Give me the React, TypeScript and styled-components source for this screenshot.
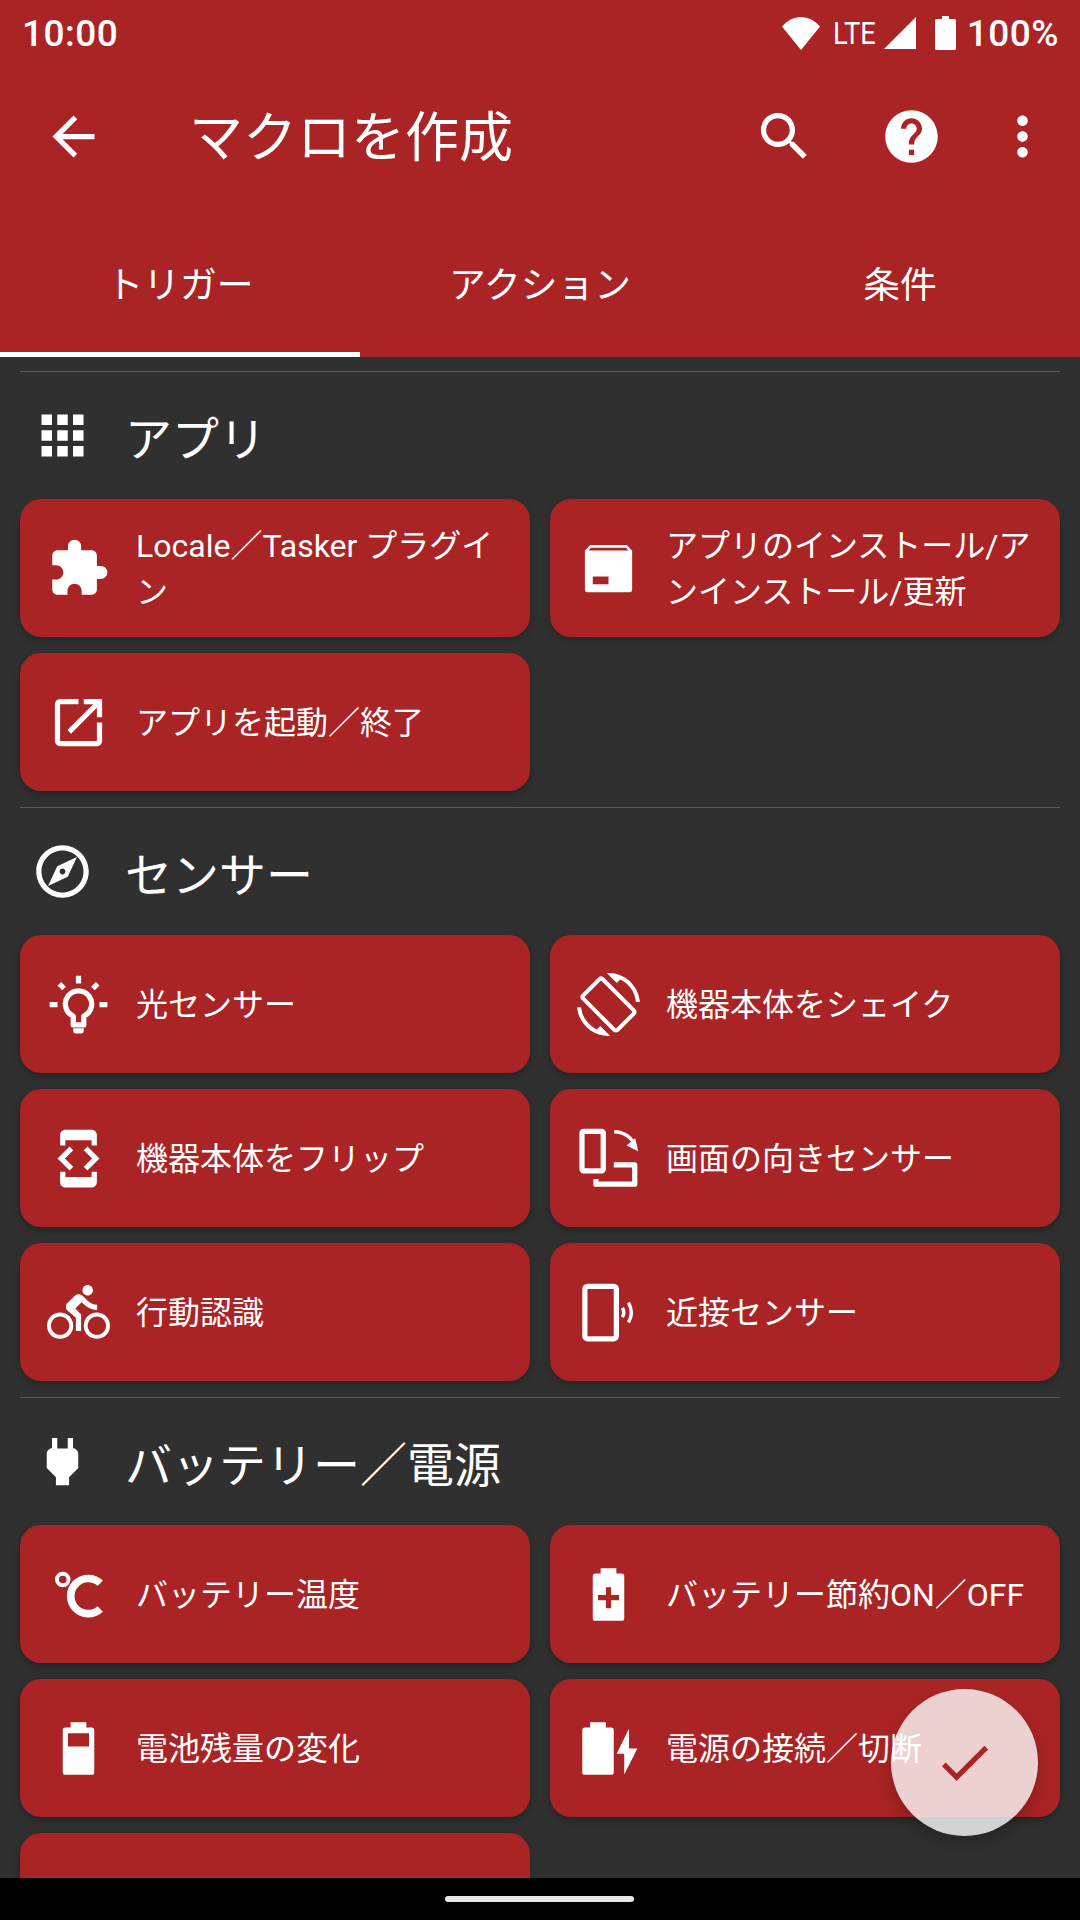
import React from 'react';
import styled, { createGlobalStyle } from 'styled-components';
import {
  MdApps,
  MdArrowBack,
  MdCheck,
  MdDeveloperMode,
  MdDirectionsBike,
  MdExtension,
  MdHelp,
  MdMoreVert,
  MdOpenInNew,
  MdOutlineExplore,
  MdPower,
  MdScreenRotation,
  MdSearch,
} from 'react-icons/md';

const RED = '#ab2425';
const FONT = 'Roboto, "Noto Sans CJK JP", sans-serif';

const GlobalStyle = createGlobalStyle`
  html, body {
    margin: 0;
    padding: 0;
    background: #000;
  }
  * {
    box-sizing: border-box;
  }
`;

const Screen = styled.div`
  position: relative;
  display: flex;
  flex-direction: column;
  width: 1080px;
  height: 1920px;
  overflow: hidden;
  background: #303030;
  color: #fff;
  font-family: ${FONT};
`;

const AppBar = styled.header`
  flex: none;
  height: 357px;
  background: ${RED};
`;

const StatusBar = styled.div`
  display: flex;
  align-items: center;
  justify-content: space-between;
  height: 66px;
  padding: 0 21px 0 22px;
  font-size: 37px;
  font-weight: 500;
`;

const ClockLabel = styled.span`
  letter-spacing: 0.5px;
`;

const StatusRight = styled.div`
  display: flex;
  align-items: center;
`;

const LteLabel = styled.span`
  width: 45px;
  margin: 0 6px 0 13px;
  font-size: 31px;
  font-weight: 400;
  line-height: 1;
  transform: scaleX(0.88);
  transform-origin: left center;
`;

const BatteryLabel = styled.span`
  margin-left: 11px;
  letter-spacing: 0.5px;
`;

const Toolbar = styled.div`
  display: flex;
  align-items: center;
  height: 140px;
  padding: 0 26px 0 42px;
`;

const Title = styled.h1`
  flex: 1;
  margin: 0 0 5px 84px;
  font-size: 54px;
  font-weight: 400;
`;

const ToolButton = styled.span<{ $gap?: number }>`
  display: flex;
  flex: none;
  width: 63px;
  height: 63px;
  margin-left: ${(p) => p.$gap ?? 0}px;
`;

const Tabs = styled.nav`
  display: grid;
  grid-template-columns: repeat(3, 360px);
  height: 151px;
`;

const Tab = styled.div<{ $active?: boolean }>`
  display: flex;
  align-items: center;
  justify-content: center;
  padding-top: 5px;
  font-size: 36.75px;
  border-bottom: 5px solid ${(p) => (p.$active ? '#fff' : 'transparent')};
`;

const Content = styled.main`
  flex: 1;
  overflow: hidden;
  padding: 14px 20px 0;
`;

const Section = styled.section`
  padding-bottom: 16px;
  border-top: 1px solid #5a5a5a;
`;

const SectionHeader = styled.div`
  display: flex;
  align-items: center;
  gap: 31px;
  height: 127px;
  padding-left: 11px;
`;

const SectionTitle = styled.h2`
  margin: 0;
  font-size: 47px;
  font-weight: 400;
`;

const CardGrid = styled.div`
  display: grid;
  grid-template-columns: repeat(2, 510px);
  grid-auto-rows: 138px;
  gap: 16px 20px;
`;

const Card = styled.div`
  display: flex;
  align-items: center;
  gap: 26px;
  padding: 0 20px 0 27px;
  border-radius: 21px;
  background: ${RED};
  box-shadow: 0 3px 7px rgba(0, 0, 0, 0.28);
`;

const CardLabel = styled.span`
  flex: 1;
  padding-top: 2px;
  font-size: 32px;
  line-height: 46px;
`;

const IconSlot = styled.span`
  display: flex;
  flex: none;
  width: 63px;
  height: 63px;
`;

const NavBar = styled.div`
  display: flex;
  flex: none;
  align-items: center;
  justify-content: center;
  height: 42px;
  background: #000;
`;

const NavPill = styled.div`
  width: 189px;
  height: 6px;
  margin-right: 2px;
  border-radius: 3px;
  background: #e8e8e8;
`;

const Fab = styled.button`
  position: absolute;
  right: 42px;
  bottom: 84px;
  display: flex;
  align-items: center;
  justify-content: center;
  width: 147px;
  height: 147px;
  padding: 0;
  border: 0;
  border-radius: 50%;
  color: ${RED};
  background: rgba(255, 255, 255, 0.79);
  box-shadow: 0 8px 16px rgba(0, 0, 0, 0.22);
`;

function Svg({ children }: { children: React.ReactNode }) {
  return (
    <svg width="63" height="63" viewBox="0 0 24 24" fill="#fff" fillRule="evenodd">
      {children}
    </svg>
  );
}

const BATTERY_BODY = 'M9 2h6v2h2a1 1 0 0 1 1 1v16a1 1 0 0 1-1 1H7a1 1 0 0 1-1-1V5a1 1 0 0 1 1-1h2V2z';

const PackageIcon = () => (
  <Svg>
    <path d="M5 3h14l2 2.2V20a1 1 0 0 1-1 1H4a1 1 0 0 1-1-1V5.2L5 3zM5.3 4.1l-.8 1h15l-.8-1H5.3zM6 15v3h6v-3H6z" />
  </Svg>
);

const BulbIcon = () => (
  <Svg>
    <path d="M11 1h2v3h-2zM1 11h3v2H1zM20 11h3v2h-3zM4 4.800l1.400-1.400 1.800 1.800-1.400 1.400zM16.800 5.200l1.800-1.800L20 4.800l-1.800 1.800zM10 21h4v1a1 1 0 0 1-1 1h-2a1 1 0 0 1-1-1z" />
    <path
      d="M10 16.400V19.800h4v-3.400a5 5 0 1 0-4 0z"
      fill="none"
      stroke="#fff"
      strokeWidth="2"
      strokeLinejoin="round"
    />
  </Svg>
);

const OrientationIcon = () => (
  <Svg>
    <g fill="none" stroke="#fff" strokeWidth="2" strokeLinejoin="round">
      <rect x="1.900" y="1.700" width="8.100" height="15" rx="0.600" />
      <path d="M14 14.400h8v7.400H7.200v-2" />
    </g>
    <path d="M14.200 1.800C18 1.800 21.400 4.300 22.400 8" fill="none" stroke="#fff" strokeWidth="1.300" />
    <path d="M23.300 9.200 18.900 7l3.300-2.700z" />
  </Svg>
);

const ProximityIcon = () => (
  <Svg>
    <rect x="3" y="2" width="12" height="20" rx="1" fill="none" stroke="#fff" strokeWidth="2" />
    <g fill="none" stroke="#fff" strokeWidth="1.300">
      <path d="M17.300 10.200a3.600 3.600 0 0 1 0 3.600" />
      <path d="M19.600 8.200a7.600 7.600 0 0 1 0 7.600" />
    </g>
  </Svg>
);

const CelsiusIcon = () => (
  <Svg>
    <g fill="none" stroke="#fff">
      <circle cx="6" cy="6.300" r="2.200" strokeWidth="1.500" />
      <path d="M20.300 7.700a6.700 6.700 0 1 0 0 9.800" strokeWidth="2.900" />
    </g>
  </Svg>
);

const BatteryLevelIcon = () => (
  <Svg>
    <path d={`${BATTERY_BODY}M8 6.200v5h8v-5H8z`} />
  </Svg>
);

const BatterySaverIcon = () => (
  <Svg>
    <path d={`${BATTERY_BODY}M11 9.200v3H8v2h3v3h2v-3h3v-2h-3v-3h-2z`} />
  </Svg>
);

const PowerConnectIcon = () => (
  <Svg>
    <path d="M5 2h6v2h2a1 1 0 0 1 1 1v16a1 1 0 0 1-1 1H3a1 1 0 0 1-1-1V5a1 1 0 0 1 1-1h2V2z" />
    <path d="M19.800 4.500 15.100 14H18v7.900L23 12h-3.200z" />
  </Svg>
);

const WifiStatus = () => (
  <svg width="38" height="33" viewBox="0 0 38 33" fill="#fff">
    <path d="M19 33 0 9.500C5 3.600 12 0 19 0s14 3.600 19 9.500z" />
  </svg>
);

const SignalStatus = () => (
  <svg width="32" height="32" viewBox="0 0 32 32" fill="#fff">
    <path d="M32 0v32H0z" />
  </svg>
);

const BatteryStatus = () => (
  <svg width="21" height="34" viewBox="0 0 21 34" fill="#fff" style={{ marginLeft: 19 }}>
    <path d="M7 0h7v3h5.500a1.500 1.500 0 0 1 1.500 1.500v28a1.500 1.500 0 0 1-1.500 1.500h-18A1.500 1.500 0 0 1 0 32.500v-28A1.500 1.500 0 0 1 1.500 3H7z" />
  </svg>
);

type Item = { icon?: React.ReactNode; label?: string };
type Group = { icon: React.ReactNode; title: string; items: Item[] };

const ICON = 63;

const GROUPS: Group[] = [
  {
    icon: <MdApps size={ICON} />,
    title: 'アプリ',
    items: [
      { icon: <MdExtension size={ICON} />, label: 'Locale／Tasker プラグイン' },
      { icon: <PackageIcon />, label: 'アプリのインストール/アンインストール/更新' },
      { icon: <MdOpenInNew size={ICON} />, label: 'アプリを起動／終了' },
    ],
  },
  {
    icon: <MdOutlineExplore size={ICON} />,
    title: 'センサー',
    items: [
      { icon: <BulbIcon />, label: '光センサー' },
      { icon: <MdScreenRotation size={ICON} />, label: '機器本体をシェイク' },
      { icon: <MdDeveloperMode size={ICON} />, label: '機器本体をフリップ' },
      { icon: <OrientationIcon />, label: '画面の向きセンサー' },
      { icon: <MdDirectionsBike size={ICON} />, label: '行動認識' },
      { icon: <ProximityIcon />, label: '近接センサー' },
    ],
  },
  {
    icon: <MdPower size={ICON} />,
    title: 'バッテリー／電源',
    items: [
      { icon: <CelsiusIcon />, label: 'バッテリー温度' },
      { icon: <BatterySaverIcon />, label: 'バッテリー節約ON／OFF' },
      { icon: <BatteryLevelIcon />, label: '電池残量の変化' },
      { icon: <PowerConnectIcon />, label: '電源の接続／切断' },
      {},
    ],
  },
];

export default function App() {
  return (
    <Screen>
      <GlobalStyle />
      <AppBar>
        <StatusBar>
          <ClockLabel>10:00</ClockLabel>
          <StatusRight>
            <WifiStatus />
            <LteLabel>LTE</LteLabel>
            <SignalStatus />
            <BatteryStatus />
            <BatteryLabel>100%</BatteryLabel>
          </StatusRight>
        </StatusBar>
        <Toolbar>
          <ToolButton>
            <MdArrowBack size={ICON} />
          </ToolButton>
          <Title>マクロを作成</Title>
          <ToolButton>
            <MdSearch size={ICON} />
          </ToolButton>
          <ToolButton $gap={64}>
            <MdHelp size={ICON} />
          </ToolButton>
          <ToolButton $gap={48}>
            <MdMoreVert size={ICON} />
          </ToolButton>
        </Toolbar>
        <Tabs>
          <Tab $active>トリガー</Tab>
          <Tab>アクション</Tab>
          <Tab>条件</Tab>
        </Tabs>
      </AppBar>
      <Content>
        {GROUPS.map((group) => (
          <Section key={group.title}>
            <SectionHeader>
              <IconSlot>{group.icon}</IconSlot>
              <SectionTitle>{group.title}</SectionTitle>
            </SectionHeader>
            <CardGrid>
              {group.items.map((item, i) => (
                <Card key={item.label ?? i}>
                  {item.icon && <IconSlot>{item.icon}</IconSlot>}
                  {item.label && <CardLabel>{item.label}</CardLabel>}
                </Card>
              ))}
            </CardGrid>
          </Section>
        ))}
      </Content>
      <NavBar>
        <NavPill />
      </NavBar>
      <Fab type="button">
        <MdCheck size={ICON} />
      </Fab>
    </Screen>
  );
}
